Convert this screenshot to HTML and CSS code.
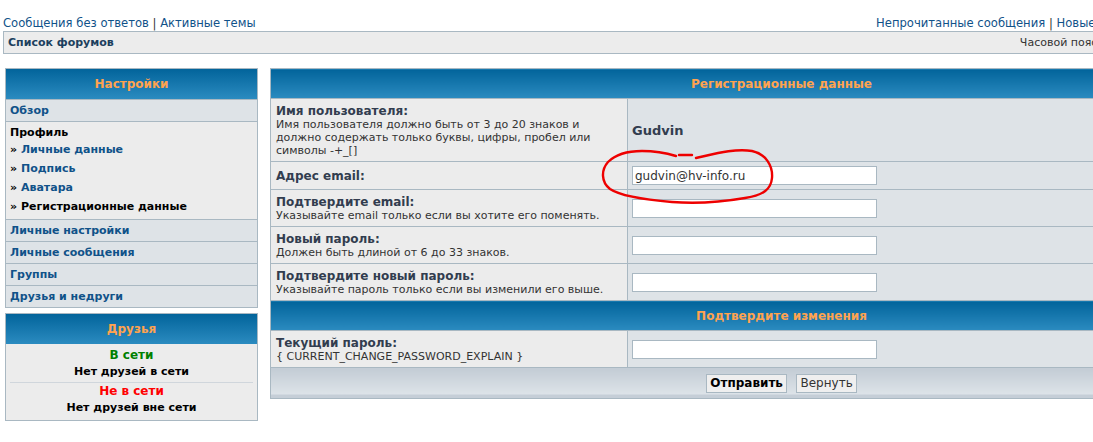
FILE: index.html
```html
<!DOCTYPE html>
<html lang="ru">
<head>
    <meta charset="UTF-8">
    <title>Личный раздел</title>
    <link rel="stylesheet" href="styles.css">
</head>
<body>
<div class="page">
    <div class="toplinks">
        <span><a href="#">Сообщения без ответов</a> | <a href="#">Активные темы</a></span>
        <span><a href="#">Непрочитанные сообщения</a> | <a href="#">Новые сообщения</a> | <a href="#">Ваши сообщения</a></span>
    </div>

    <div class="navbar">
        <a href="#" class="nav-title">Список форумов</a>
        <span class="timezone">Часовой пояс: UTC + 4 часа [ Летнее время ]</span>
    </div>

    <div class="main">
        <div class="sidebar">
            <div class="panel">
                <div class="cat">Настройки</div>
                <div class="row"><a href="#">Обзор</a></div>
                <div class="profile">
                    <div class="profile-title">Профиль</div>
                    <div class="sub">&raquo; <a href="#">Личные данные</a></div>
                    <div class="sub">&raquo; <a href="#">Подпись</a></div>
                    <div class="sub">&raquo; <a href="#">Аватара</a></div>
                    <div class="sub">&raquo; <span class="active">Регистрационные данные</span></div>
                </div>
                <div class="row"><a href="#">Личные настройки</a></div>
                <div class="row"><a href="#">Личные сообщения</a></div>
                <div class="row"><a href="#">Группы</a></div>
                <div class="row last"><a href="#">Друзья и недруги</a></div>
            </div>

            <div class="panel friends">
                <div class="cat">Друзья</div>
                <div class="friends-body">
                    <div class="online">В сети</div>
                    <div class="none">Нет друзей в сети</div>
                    <hr>
                    <div class="offline">Не в сети</div>
                    <div class="none">Нет друзей вне сети</div>
                </div>
            </div>
        </div>

        <form class="content">
            <table class="tablebg">
                <tr><th colspan="2">Регистрационные данные</th></tr>
                <tr class="r-user">
                    <td class="label"><b>Имя пользователя:</b><span class="explain">Имя пользователя должно быть от 3 до 20 знаков и должно содержать только буквы, цифры, пробел или символы -+_[]</span></td>
                    <td class="value"><b class="username">Gudvin</b></td>
                </tr>
                <tr>
                    <td class="label"><b>Адрес email:</b></td>
                    <td class="value"><input type="text" class="post" value="gudvin@hv-info.ru"></td>
                </tr>
                <tr>
                    <td class="label"><b>Подтвердите email:</b><span class="explain">Указывайте email только если вы хотите его поменять.</span></td>
                    <td class="value"><input type="text" class="post"></td>
                </tr>
                <tr>
                    <td class="label"><b>Новый пароль:</b><span class="explain">Должен быть длиной от 6 до 33 знаков.</span></td>
                    <td class="value"><input type="password" class="post"></td>
                </tr>
                <tr>
                    <td class="label"><b>Подтвердите новый пароль:</b><span class="explain">Указывайте пароль только если вы изменили его выше.</span></td>
                    <td class="value"><input type="password" class="post"></td>
                </tr>
                <tr><th colspan="2">Подтвердите изменения</th></tr>
                <tr>
                    <td class="label"><b>Текущий пароль:</b><span class="explain">{ CURRENT_CHANGE_PASSWORD_EXPLAIN }</span></td>
                    <td class="value"><input type="password" class="post"></td>
                </tr>
                <tr>
                    <td class="cat-bottom" colspan="2">
                        <button type="button" class="btnmain">Отправить</button>
                        <button type="button" class="btnlite">Вернуть</button>
                    </td>
                </tr>
            </table>
        </form>
    </div>

    <svg class="scribble" width="1300" height="442" viewBox="0 0 1300 442">
        <path d="M679 155 L692 155" />
        <path d="M696 158 C714 154 735 148 752 151 C766 154 773 166 772 178 C771 189 764 195 745 198 C722 202 698 204 672 202 C648 200 622 197 610 189 C601 182 601 170 608 162 C616 154 628 151 642 151 C656 151 666 153 676 156" />
    </svg>
</div>
</body>
</html>
```

FILE: styles.css
```css
* {
    box-sizing: border-box;
}
html {
    overflow: hidden;
}
body {
    margin: 0;
    background: #fff;
    font-family: "DejaVu Sans", Verdana, sans-serif;
    font-size: 11px;
    color: #333;
}
a {
    color: #105289;
    text-decoration: none;
}
.page {
    position: relative;
    width: 1286px;
    padding: 0 3px;
}

.toplinks {
    display: flex;
    justify-content: space-between;
    padding-top: 15px;
    font-size: 11.6px;
    line-height: 16px;
}

.navbar {
    display: flex;
    justify-content: space-between;
    align-items: center;
    height: 23px;
    padding: 0 4px;
    background: #ececec;
    border-top: 1px solid #a9b8c2;
    border-bottom: 1px solid #a9b8c2;
    border-left: 1px solid #a9b8c2;
}
.nav-title {
    font-weight: bold;
    color: #1c3f5e;
}
.timezone {
    color: #333;
    white-space: nowrap;
}

.main {
    display: flex;
    align-items: flex-start;
    gap: 12px;
    margin-top: 14px;
    padding-left: 2px;
}

/* sidebar */
.sidebar {
    width: 253px;
    flex-shrink: 0;
}
.panel {
    border: 1px solid #a9b8c2;
}
.cat {
    height: 30px;
    line-height: 30px;
    text-align: center;
    font-size: 12px;
    font-weight: bold;
    color: #ffa34f;
    background: linear-gradient(#02649b, #2b8bc0);
}
.row {
    height: 22px;
    line-height: 21px;
    padding-left: 4px;
    background: #dee3e7;
    border-top: 1px solid #a9b8c2;
    font-weight: bold;
}
.profile {
    padding: 3px 4px;
    background: #ececec;
    border-top: 1px solid #a9b8c2;
    font-weight: bold;
    color: #000;
}
.profile-title {
    line-height: 15px;
}
.sub {
    line-height: 19px;
}
.sub .active {
    color: #000;
}

.friends {
    margin-top: 5px;
}
.friends-body {
    padding: 3px 4px;
    background: #ececec;
    text-align: center;
    font-weight: bold;
    color: #000;
}
.friends-body hr {
    margin: 1px 0 0;
    border: 0;
    border-top: 1px solid #d0d6dc;
}
.online,
.offline {
    font-size: 12px;
    line-height: 16px;
}
.online {
    color: #008000;
}
.offline {
    color: #ff0000;
}
.none {
    line-height: 18px;
}

/* registration form */
.content {
    width: 1023px;
    flex-shrink: 0;
    margin: 0;
}
.tablebg {
    width: 100%;
    border-collapse: collapse;
    border: 1px solid #a9b8c2;
}
.tablebg th {
    height: 30px;
    padding: 0;
    font-size: 12px;
    color: #ffa34f;
    background: linear-gradient(#02649b, #2b8bc0);
    border-top: 1px solid #a9b8c2;
}
.tablebg td {
    border-top: 1px solid #a9b8c2;
}
.label {
    width: 357px;
    padding: 5px 5px 4px;
    background: #ececec;
    border-right: 1px solid #a9b8c2;
    color: #323d4f;
    font-size: 12px;
    line-height: 14px;
}
.label b {
    display: block;
}
.explain {
    display: block;
    font-size: 11px;
    line-height: 13px;
    color: #333;
}
.value {
    padding: 4px;
    background: #dee3e7;
}
.username {
    font-size: 13px;
    color: #323d4f;
}
.post {
    display: block;
    width: 245px;
    height: 19px;
    margin: 0;
    padding: 0 2px;
    border: 1px solid #a9b8c2;
    background: #fff;
    font-family: "DejaVu Sans", Verdana, sans-serif;
    font-size: 12px;
    color: #333;
}
.cat-bottom {
    height: 31px;
    text-align: center;
    background: linear-gradient(#c3ccd5, #dde3e8 86%, #c5ced7 86%);
}
.cat-bottom button {
    height: 19px;
    padding: 0 3px;
    margin: 0 3px;
    border: 1px solid #a9b8c2;
    background: #efefef;
    font-family: "DejaVu Sans", Verdana, sans-serif;
    font-size: 12px;
    color: #333;
}
.btnmain {
    font-weight: bold;
    color: #000 !important;
}

.scribble {
    position: absolute;
    top: 0;
    left: 0;
    pointer-events: none;
}
.scribble path {
    fill: none;
    stroke: #ee0000;
    stroke-width: 2.4;
    stroke-linecap: round;
}
```
